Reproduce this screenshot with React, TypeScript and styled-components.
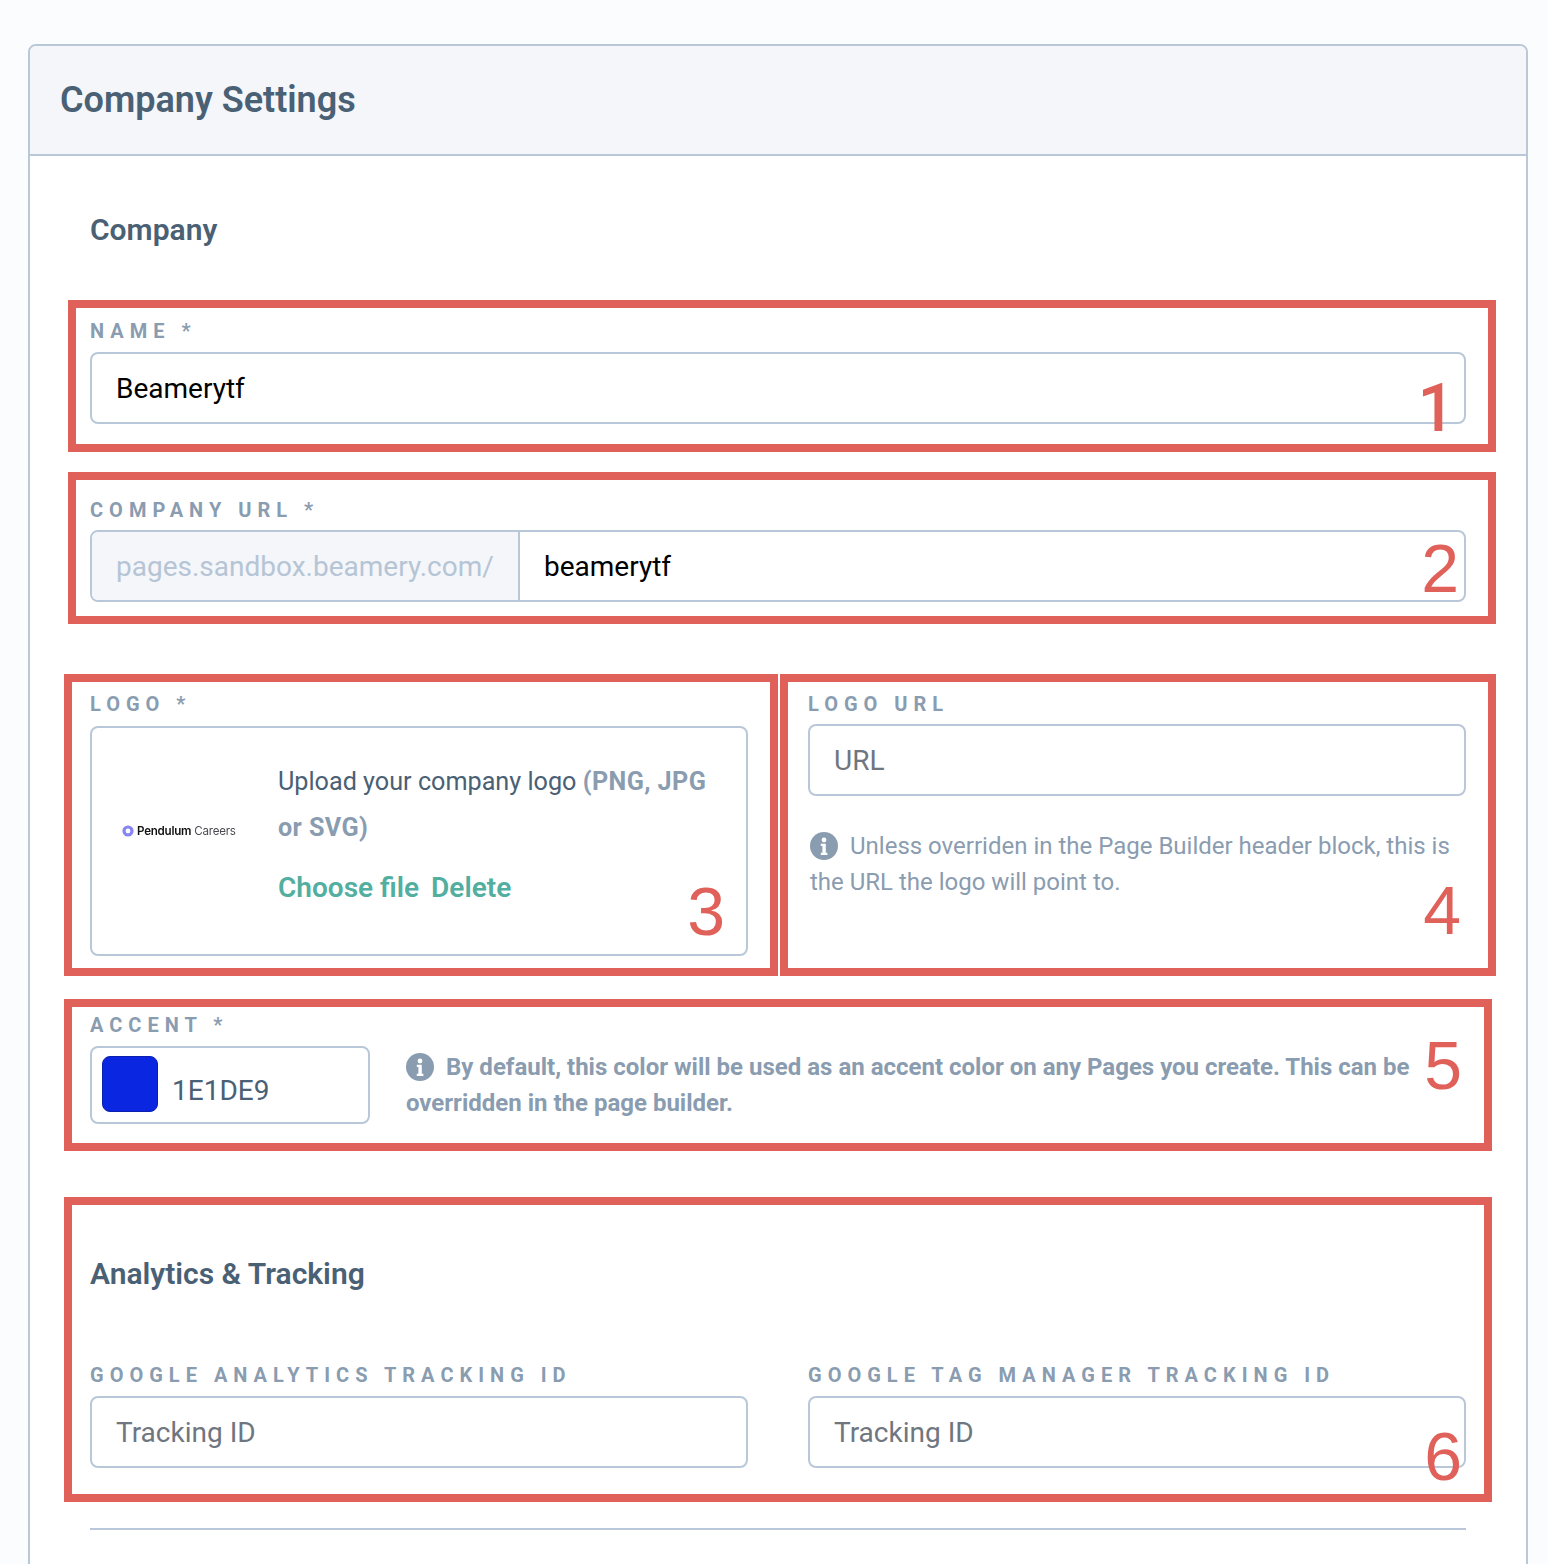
import React from "react";
import styled, { createGlobalStyle } from "styled-components";

const Global = createGlobalStyle`
  html, body { margin: 0; padding: 0; background: #fbfcfe; }
  body { font-family: Roboto, "Liberation Sans", sans-serif; }
  * { box-sizing: border-box; }
`;

const Page = styled.div`
  position: relative;
  width: 1548px;
  height: 1564px;
  overflow: hidden;
  padding: 44px 20px 0 28px;
`;
const Card = styled.section`
  height: 1640px;
  background: #fff;
  border: 2px solid #b9c8d8;
  border-radius: 8px;
`;
const CardHeader = styled.header`
  height: 110px;
  background: #f4f6fa;
  border-bottom: 2px solid #b9c8d8;
  border-radius: 6px 6px 0 0;
  padding: 0 30px;
  display: flex;
  align-items: center;
`;
const Title = styled.h1`
  margin: 0;
  font-size: 36px;
  font-weight: 600;
  color: #4a6074;
`;
const CardBody = styled.div`
  padding: 54px 60px 0;
  display: flex;
  flex-direction: column;
`;
const SectionTitle = styled.h2<{ $after: number }>`
  margin: 0 0 ${(p) => p.$after}px;
  height: 40px;
  line-height: 40px;
  font-size: 30px;
  font-weight: 600;
  color: #4a6074;
`;
const Field = styled.div<{ $after?: number; $width?: number }>`
  display: flex;
  flex-direction: column;
  margin-bottom: ${(p) => p.$after ?? 0}px;
  width: ${(p) => (p.$width ? `${p.$width}px` : "auto")};
  flex: none;
`;
const Label = styled.label<{ $gap?: number }>`
  display: block;
  height: 24px;
  line-height: 24px;
  margin-bottom: ${(p) => p.$gap ?? 9}px;
  font-size: 20px;
  font-weight: 700;
  letter-spacing: 6px;
  color: #8a9cb0;
  white-space: pre;
`;
const InputBox = styled.div`
  height: 72px;
  border: 2px solid #b9c8d8;
  border-radius: 8px;
  background: #fff;
  display: flex;
  align-items: center;
  overflow: hidden;
`;
const InputText = styled.span<{ $placeholder?: boolean }>`
  padding-left: 24px;
  font-size: 28px;
  color: ${(p) => (p.$placeholder ? "#6f7680" : "#000")};
`;
const Addon = styled.span`
  flex: none;
  width: 428px;
  height: 100%;
  display: flex;
  align-items: center;
  padding-left: 24px;
  font-size: 28px;
  color: #b6c5d5;
  background: #f4f6fa;
  border-right: 2px solid #b9c8d8;
`;
const Row = styled.div<{ $after?: number }>`
  display: flex;
  gap: 60px;
  margin-bottom: ${(p) => p.$after ?? 0}px;
`;
const UploadBox = styled.div`
  height: 230px;
  border: 2px solid #b9c8d8;
  border-radius: 8px;
  display: flex;
  align-items: center;
  padding-left: 30px;
`;
const LogoMark = styled.div`
  flex: none;
  width: 156px;
  display: flex;
  align-items: center;
  gap: 3px;
  margin-bottom: 20px;
  font-family: Inter, Roboto, sans-serif;
  font-size: 11.6px;
  letter-spacing: -0.25px;
  color: #4b4b52;
  white-space: nowrap;
  filter: blur(0.25px);
  b { font-weight: 600; color: #111; }
`;
const UploadInfo = styled.div`
  width: 434px;
  font-size: 25.2px;
  line-height: 46px;
  color: #4a6074;
  padding-bottom: 12px;
  b { font-weight: 700; letter-spacing: 0.4px; color: #8a9cb0; }
`;
const UploadActions = styled.div`
  display: flex;
  gap: 12px;
  margin-top: 14px;
  font-size: 28px;
  font-weight: 600;
  color: #52ae9f;
  line-height: 46px;
`;
const Help = styled.p<{ $bold?: boolean; $top?: number }>`
  margin: ${(p) => p.$top ?? 0}px 0 0;
  padding-left: 2px;
  font-size: 24px;
  line-height: 36px;
  font-weight: ${(p) => (p.$bold ? 700 : 400)};
  color: #8a9cb0;
  svg { vertical-align: -6px; margin-right: 12px; }
`;
const AccentRow = styled.div`
  display: flex;
  gap: 34px;
  align-items: flex-start;
`;
const ColorBox = styled.div`
  flex: none;
  width: 280px;
  height: 78px;
  border: 2px solid #b9c8d8;
  border-radius: 8px;
  display: flex;
  align-items: flex-start;
  padding: 8px 0 0 10px;
  gap: 14px;
`;
const Swatch = styled.span`
  width: 56px;
  height: 56px;
  background: #0a26e0;
  border: 1px solid #0b1fb0;
  border-radius: 8px;
`;
const ColorValue = styled.span`
  font-size: 28px;
  line-height: 34px;
  margin-top: 18px;
  color: #4a6074;
`;
const AccentHelp = styled.div`
  width: 1020px;
  margin-top: 3px;
`;
const Divider = styled.hr`
  margin: 60px 0 0;
  border: 0;
  height: 2px;
  background: #b9c8d8;
`;

const Frame = styled.div<{ $x: number; $y: number; $w: number; $h: number }>`
  position: absolute;
  left: ${(p) => p.$x}px;
  top: ${(p) => p.$y}px;
  width: ${(p) => p.$w}px;
  height: ${(p) => p.$h}px;
  border: 8px solid #e0605a;
  pointer-events: none;
`;
const FrameNumber = styled.span<{ $right: number; $bottom: number; $plainOne?: boolean }>`
  position: absolute;
  right: ${(p) => p.$right}px;
  bottom: ${(p) => p.$bottom}px;
  font-family: ${(p) => (p.$plainOne ? "Roboto" : '"Liberation Sans", Arial')}, sans-serif;
  font-size: ${(p) => (p.$plainOne ? 66 : 68)}px;
  font-weight: ${(p) => (p.$plainOne ? 500 : 400)};
  line-height: 68px;
  color: #e0605a;
`;

const InfoIcon = () => (
  <svg width="28" height="28" viewBox="0 0 28 28" aria-hidden="true">
    <circle cx="14" cy="14" r="14" fill="#8a9cb0" />
    <circle cx="14" cy="8" r="2.4" fill="#fff" />
    <path d="M10.8 11.8h5v9h1.6v2.2h-6.6v-2.2h1.6v-6.8h-1.6z" fill="#fff" />
  </svg>
);

const LogoRing = () => (
  <svg width="12" height="12" viewBox="0 0 12 12" aria-hidden="true">
    <circle cx="6" cy="6" r="4" fill="none" stroke="#8784f3" strokeWidth="3.2" />
  </svg>
);

const frames = [
  { n: "1", x: 68, y: 300, w: 1428, h: 152, r: 33, b: 1 },
  { n: "2", x: 68, y: 472, w: 1428, h: 152, r: 29, b: 14 },
  { n: "3", x: 64, y: 674, w: 714, h: 302, r: 45, b: 23 },
  { n: "4", x: 780, y: 674, w: 716, h: 302, r: 27, b: 24 },
  { n: "5", x: 64, y: 999, w: 1428, h: 152, r: 22, b: 44 },
  { n: "6", x: 64, y: 1197, w: 1428, h: 305, r: 22, b: 4 },
];

export default function App() {
  return (
    <Page>
      <Global />
      <Card>
        <CardHeader>
          <Title>Company Settings</Title>
        </CardHeader>
        <CardBody>
          <SectionTitle $after={69}>Company</SectionTitle>
          <Field $after={74}>
            <Label>{"NAME *"}</Label>
            <InputBox>
              <InputText>Beamerytf</InputText>
            </InputBox>
          </Field>
          <Field $after={90}>
            <Label $gap={8}>{"COMPANY URL *"}</Label>
            <InputBox>
              <Addon>pages.sandbox.beamery.com/</Addon>
              <InputText>beamerytf</InputText>
            </InputBox>
          </Field>
          <Row $after={57}>
            <Field $width={658}>
              <Label $gap={10}>{"LOGO *"}</Label>
              <UploadBox>
                <LogoMark>
                  <LogoRing />
                  <span>
                    <b>Pendulum</b> Careers
                  </span>
                </LogoMark>
                <UploadInfo>
                  Upload your company logo <b>(PNG, JPG or SVG)</b>
                  <UploadActions>
                    <span>Choose file</span>
                    <span>Delete</span>
                  </UploadActions>
                </UploadInfo>
              </UploadBox>
            </Field>
            <Field $width={658}>
              <Label $gap={8}>{"LOGO URL"}</Label>
              <InputBox>
                <InputText $placeholder>URL</InputText>
              </InputBox>
              <Help $top={32}>
                <InfoIcon />
                Unless overriden in the Page Builder header block, this is the URL the logo will point to.
              </Help>
            </Field>
          </Row>
          <Field $after={130}>
            <Label>{"ACCENT *"}</Label>
            <AccentRow>
              <ColorBox>
                <Swatch />
                <ColorValue>1E1DE9</ColorValue>
              </ColorBox>
              <AccentHelp>
                <Help $bold>
                  <InfoIcon />
                  By default, this color will be used as an accent color on any Pages you create. This can be overridden in the page builder.
                </Help>
              </AccentHelp>
            </AccentRow>
          </Field>
          <SectionTitle $after={69}>Analytics &amp; Tracking</SectionTitle>
          <Row>
            <Field $width={658}>
              <Label>{"GOOGLE ANALYTICS TRACKING ID"}</Label>
              <InputBox>
                <InputText $placeholder>Tracking ID</InputText>
              </InputBox>
            </Field>
            <Field $width={658}>
              <Label>{"GOOGLE TAG MANAGER TRACKING ID"}</Label>
              <InputBox>
                <InputText $placeholder>Tracking ID</InputText>
              </InputBox>
            </Field>
          </Row>
          <Divider />
        </CardBody>
      </Card>
      {frames.map((f) => (
        <Frame key={f.n} $x={f.x} $y={f.y} $w={f.w} $h={f.h}>
          <FrameNumber $right={f.r} $bottom={f.b} $plainOne={f.n === "1"}>
            {f.n}
          </FrameNumber>
        </Frame>
      ))}
    </Page>
  );
}
